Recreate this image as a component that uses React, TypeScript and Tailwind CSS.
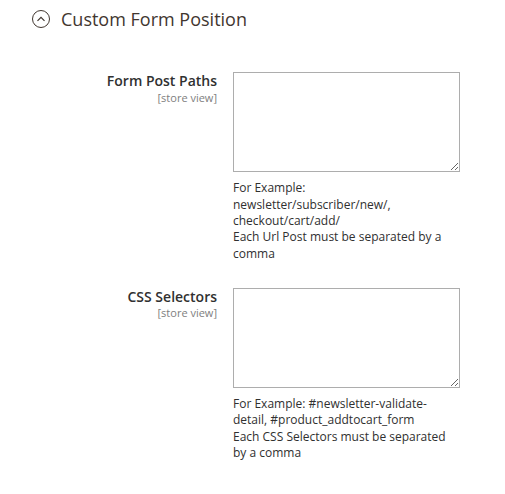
import React from 'react';

interface Field {
    label: string;
    scope: string;
    note: string[];
}

const fields: Field[] = [
    {
        label: 'Form Post Paths',
        scope: '[store view]',
        note: ['For Example: newsletter/subscriber/new/, checkout/cart/add/', 'Each Url Post must be separated by a comma'],
    },
    {
        label: 'CSS Selectors',
        scope: '[store view]',
        note: ['For Example: #newsletter-validate-detail, #product_addtocart_form', 'Each CSS Selectors must be separated by a comma'],
    },
];

const App: React.FC = () => {
    return (
        <div className="min-h-[494px] bg-white font-['Open_Sans',sans-serif] text-[#303030]">
            {/* Section title */}
            <div className="flex items-center pl-[32px] pt-[7px]">
                <svg width="18" height="18" viewBox="0 0 18 18" className="shrink-0">
                    <circle cx="9" cy="9" r="8.5" fill="none" stroke="#41362f" strokeWidth="1" />
                    <path d="M5.5 10.8 L9 7.3 L12.5 10.8" fill="none" stroke="#41362f" strokeWidth="1.2" />
                </svg>
                <h2 className="ml-[11px] text-[18px] font-normal leading-[1.36] text-[#41362f]">Custom Form Position</h2>
            </div>

            {/* Fields */}
            <div className="mt-[41px] flex flex-col gap-[26px]">
                {fields.map(f => (
                    <div key={f.label} className="flex">
                        <div className="w-[217px] shrink-0 text-right">
                            <div className="text-[14px] font-semibold leading-[1.36] -mt-[1px]">{f.label}</div>
                            <div className="text-[11px] leading-[1.36] text-[#808080]">{f.scope}</div>
                        </div>
                        <div className="ml-[16px] w-[227px]">
                            <textarea className="block w-[227px] h-[100px] border border-[#adadad] bg-white" />
                            <div className="mt-[8px] text-[12px] leading-[1.36]">
                                {f.note.map(n => <div key={n}>{n}</div>)}
                            </div>
                        </div>
                    </div>
                ))}
            </div>
        </div>
    );
};

export default App;
